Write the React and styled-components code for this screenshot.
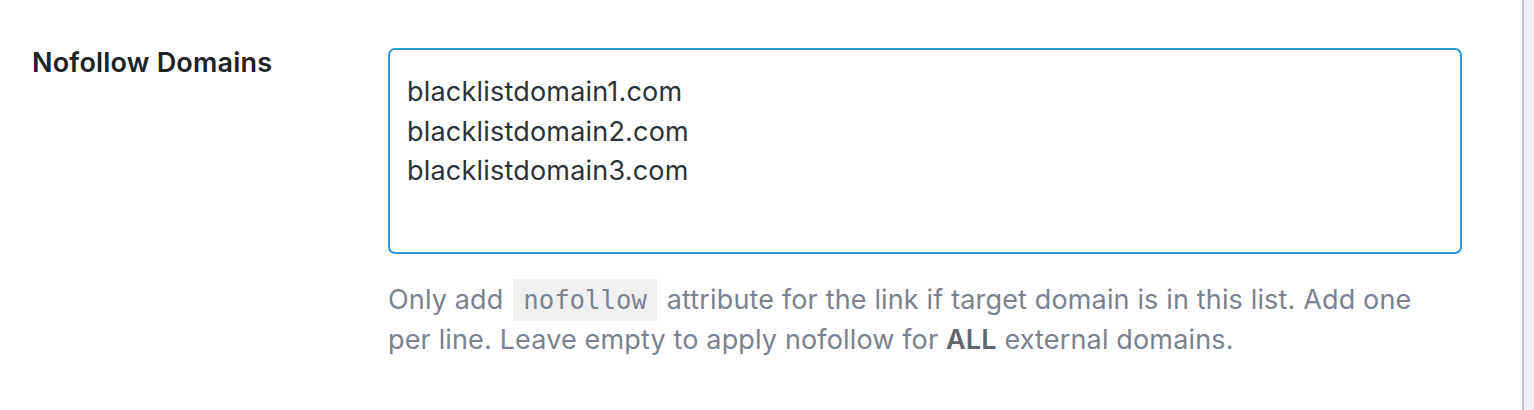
import styled, { createGlobalStyle } from "styled-components";

const GlobalStyle = createGlobalStyle`
  html, body {
    margin: 0;
    padding: 0;
    background: #ffffff;
    font-family: Inter, "Noto Sans", sans-serif;
  }
`;

const domains = ["blacklistdomain1.com", "blacklistdomain2.com", "blacklistdomain3.com"];

function App() {
  return (
    <>
      <GlobalStyle />
      <Page>
        <Main>
          <FieldRow>
            <Label htmlFor="nofollow-domains">Nofollow Domains</Label>
            <Control>
              <DomainArea
                id="nofollow-domains"
                defaultValue={domains.join("\n")}
                spellCheck={false}
              />
              <Description>
                Only add <Code>nofollow</Code> attribute for the link if target domain is in this list. Add one
                per line. Leave empty to apply nofollow for <strong>ALL</strong> external domains.
              </Description>
            </Control>
          </FieldRow>
        </Main>
        <Sidebar />
      </Page>
    </>
  );
}

export default App;

const Page = styled.div`
  display: flex;
  width: 100%;
  height: 410px;
`;

const Main = styled.div`
  flex: 1;
  padding: 48px 0 0 32px;
`;

const Sidebar = styled.div`
  width: 10px;
  border-left: 2px solid #c3c6cf;
  background: #eef0f4;
`;

const FieldRow = styled.div`
  display: flex;
  align-items: flex-start;
`;

const Label = styled.label`
  width: 356px;
  flex-shrink: 0;
  font-size: 27px;
  line-height: 30px;
  letter-spacing: 0.2px;
  font-weight: 600;
  color: #1d2327;
`;

const Control = styled.div`
  width: 1074px;
`;

const DomainArea = styled.textarea`
  display: block;
  box-sizing: border-box;
  width: 100%;
  height: 206px;
  margin: 0;
  padding: 22px 17px;
  border: 2px solid #2a9bd6;
  border-radius: 7px;
  outline: none;
  resize: none;
  font-family: Inter, "Noto Sans", sans-serif;
  font-size: 27px;
  line-height: 39.5px;
  letter-spacing: 0.2px;
  color: #2c3338;
  background: #ffffff;
`;

const Description = styled.p`
  margin: 26px 0 0;
  font-size: 27px;
  line-height: 40px;
  letter-spacing: 0.15px;
  color: #7b828d;

  strong {
    font-weight: 600;
    color: #5f6670;
  }
`;

const Code = styled.code`
  padding: 6px 10px;
  margin: 0 2px;
  background: #f0f0f1;
  font-family: "DejaVu Sans Mono", monospace;
  font-size: 25.7px;
  letter-spacing: 0;
  color: #7b828d;
`;
